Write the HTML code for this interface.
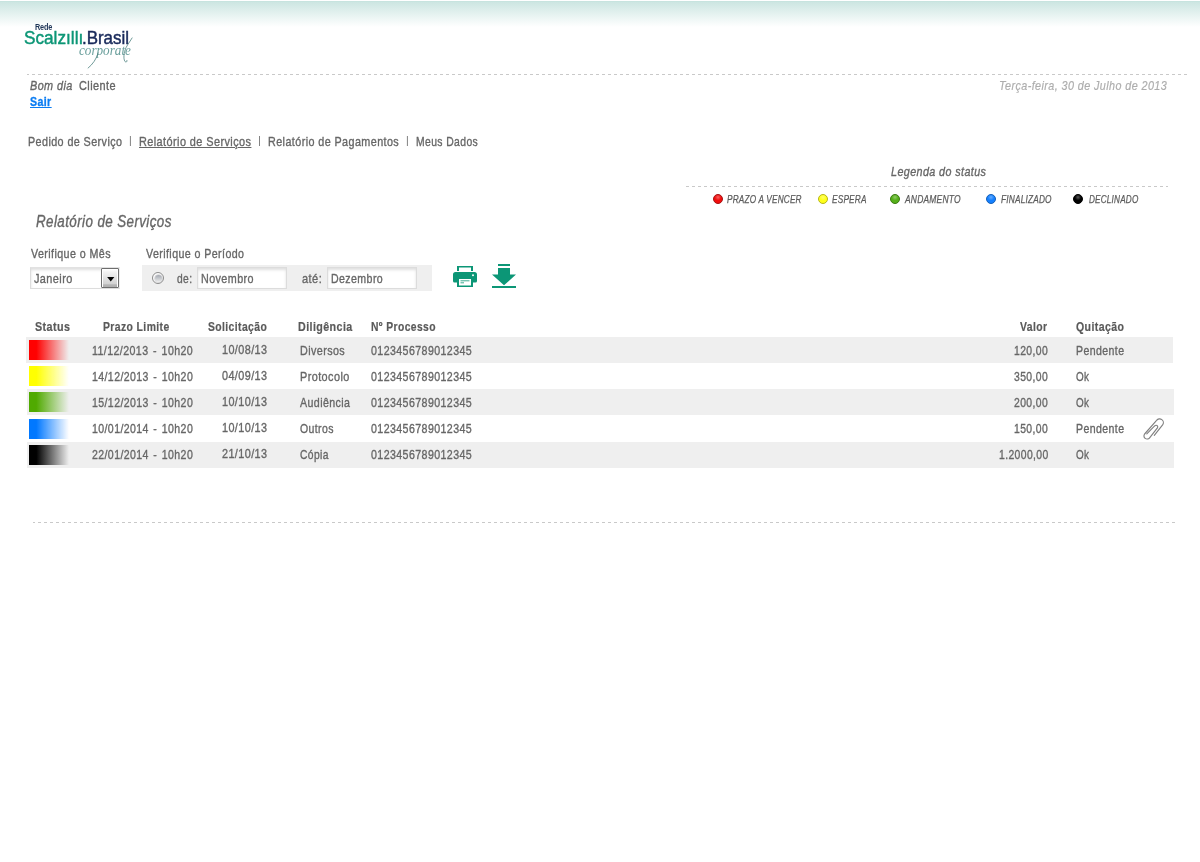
<!DOCTYPE html>
<html lang="pt-BR">
<head>
<meta charset="utf-8">
<title>Relatório de Serviços</title>
<style>
html,body{margin:0;padding:0;background:#fff;}
body{width:1200px;height:862px;position:relative;overflow:hidden;font-family:"Liberation Sans",sans-serif;color:#666;}
.t{-webkit-text-stroke:.35px currentColor;position:absolute;white-space:nowrap;line-height:1;transform-origin:0 0;margin:0;padding:0;font-weight:normal;color:#666;text-decoration:none;display:block;}
.abs{position:absolute;}
.topgrad{left:0;top:1px;width:1200px;height:26px;background:linear-gradient(#c3e2dd,#cde6e2 5%,#fff);}
.dash{height:1px;background:repeating-linear-gradient(90deg,#c9c9c9 0,#c9c9c9 3px,transparent 3px,transparent 6px);}
.dot{position:absolute;width:8px;height:8px;border-radius:50%;border:1px solid;top:194px;}
.row{position:absolute;left:27px;width:1147px;height:26px;background:#efefef;}
.sw{position:absolute;left:29px;width:40px;height:20px;}
.inp{position:absolute;box-sizing:border-box;height:22px;background:#fff;border:1px solid #dcdcdc;box-shadow:inset 0 2px 3px rgba(0,0,0,.13);}
</style>
</head>
<body>
<div class="abs topgrad"></div>
<div id="page" style="position:absolute;left:0;top:0;width:1200px;height:862px;will-change:transform;opacity:.999">

<header>
<div class="abs logo" style="left:0;top:0;width:160px;height:74px;">
<span class="t" style="left:34.6px;top:22.6px;font-size:8.3px;font-weight:bold;color:#1d3557;transform:scaleX(.88);letter-spacing:-.25px;-webkit-text-stroke:0">Rede</span>
<span class="t" style="left:24.2px;top:29px;font-size:18px;color:#0c9676;transform:scaleX(.955);-webkit-text-stroke:.45px #0c9676">Scalzıllı</span>
<span class="t" style="left:81.9px;top:29px;font-size:18px;color:#18295a;transform:scaleX(.94);-webkit-text-stroke:.45px #18295a">.Brasil</span>
<span class="t" style="left:79px;top:43.5px;font-family:'Liberation Serif',serif;font-style:italic;font-size:14px;color:#6a9f9c;transform:scaleX(.94);-webkit-text-stroke:0">corporate</span>
<svg class="abs" style="left:0;top:0" width="160" height="74" viewBox="0 0 160 74"><path d="M98.300 52.500C96.500 59 92.500 64.500 87.800 68.300" fill="none" stroke="#4d827f" stroke-width=".8"/><path d="M132.300 37.600C129.500 42.500 126 46 124.600 51.500C123.300 57 124 61.500 125.800 62C127 62 127.300 60.800 126.600 60" fill="none" stroke="#4d827f" stroke-width=".8"/></svg>
</div>

<div class="abs dash" style="left:27px;top:74px;width:1160px;background-position:-1px 0"></div>
<span class="t" style="left:29.50px;top:78.50px;font-size:13px;font-style:italic;letter-spacing:0.5px;transform:scaleX(0.8333);">Bom dia</span>
<span class="t" style="left:78.50px;top:78.50px;font-size:13px;letter-spacing:0.5px;transform:scaleX(0.8397);">Cliente</span>
<a class="t" href="#" style="left:30.00px;top:95.25px;font-size:13px;font-weight:bold;color:#0a7cf2;text-decoration:underline;letter-spacing:0.5px;transform:scaleX(0.8149);">Sair</a>
<span class="t" style="left:999.25px;top:78.50px;font-size:13px;font-style:italic;color:#adadad;-webkit-text-stroke:.2px currentColor;letter-spacing:0.5px;transform:scaleX(0.8295);">Terça-feira, 30 de Julho de 2013</span>
</header>
<nav>
<a class="t" href="#" style="left:28.00px;top:135.00px;font-size:13px;letter-spacing:0.5px;transform:scaleX(0.8281);">Pedido de Serviço</a>
<a class="t" href="#" style="left:138.75px;top:135.00px;font-size:13px;text-decoration:underline;letter-spacing:0.5px;transform:scaleX(0.8386);">Relatório de Serviços</a>
<a class="t" href="#" style="left:267.50px;top:135.00px;font-size:13px;letter-spacing:0.5px;transform:scaleX(0.8291);">Relatório de Pagamentos</a>
<a class="t" href="#" style="left:416.25px;top:135.00px;font-size:13px;letter-spacing:0.5px;transform:scaleX(0.7969);">Meus Dados</a>
<span class="t" style="left:128.90px;top:136.45px;font-size:10.3px;color:#6c6c6c;-webkit-text-stroke:0;">|</span>
<span class="t" style="left:258.15px;top:136.45px;font-size:10.3px;color:#6c6c6c;-webkit-text-stroke:0;">|</span>
<span class="t" style="left:405.90px;top:136.45px;font-size:10.3px;color:#6c6c6c;-webkit-text-stroke:0;">|</span>
</nav>
<section class="legend">
<span class="t" style="left:891.25px;top:164.75px;font-size:13px;font-style:italic;letter-spacing:0.5px;transform:scaleX(0.8262);">Legenda do status</span>
<div class="abs dash" style="left:686px;top:186px;width:482px;"></div>
<i class="dot" style="left:713px;background:radial-gradient(circle at 50% 28%,rgba(255,255,255,.35),rgba(255,255,255,0) 45%),#f20d0d;border-color:#a31515"></i>
<span class="t" style="left:726.50px;top:193.75px;font-size:10.5px;font-style:italic;color:#5c5c5c;-webkit-text-stroke:.25px currentColor;letter-spacing:0.25px;transform:scaleX(0.7822);">PRAZO A VENCER</span>
<i class="dot" style="left:818px;background:radial-gradient(circle at 50% 28%,rgba(255,255,255,.35),rgba(255,255,255,0) 45%),#ffff1a;border-color:#b5b51a"></i>
<span class="t" style="left:831.50px;top:193.75px;font-size:10.5px;font-style:italic;color:#5c5c5c;-webkit-text-stroke:.25px currentColor;letter-spacing:0.25px;transform:scaleX(0.7866);">ESPERA</span>
<i class="dot" style="left:889.5px;background:radial-gradient(circle at 50% 28%,rgba(255,255,255,.35),rgba(255,255,255,0) 45%),#55b019;border-color:#3c7a14"></i>
<span class="t" style="left:904.50px;top:193.75px;font-size:10.5px;font-style:italic;color:#5c5c5c;-webkit-text-stroke:.25px currentColor;letter-spacing:0.25px;transform:scaleX(0.8054);">ANDAMENTO</span>
<i class="dot" style="left:985.75px;background:radial-gradient(circle at 50% 28%,rgba(255,255,255,.35),rgba(255,255,255,0) 45%),#1480ff;border-color:#1560b8"></i>
<span class="t" style="left:1000.75px;top:193.75px;font-size:10.5px;font-style:italic;color:#5c5c5c;-webkit-text-stroke:.25px currentColor;letter-spacing:0.25px;transform:scaleX(0.7879);">FINALIZADO</span>
<i class="dot" style="left:1072.75px;background:radial-gradient(circle at 50% 28%,rgba(255,255,255,.35),rgba(255,255,255,0) 45%),#000;border-color:#000"></i>
<span class="t" style="left:1088.75px;top:193.75px;font-size:10.5px;font-style:italic;color:#5c5c5c;-webkit-text-stroke:.25px currentColor;letter-spacing:0.25px;transform:scaleX(0.7785);">DECLINADO</span>
</section>
<main>
<h1 class="t" style="left:35.60px;top:214.25px;font-size:16px;font-style:italic;letter-spacing:0.5px;transform:scaleX(0.8354);">Relatório de Serviços</h1>
<label class="t" style="left:31.25px;top:247.00px;font-size:13px;letter-spacing:0.5px;transform:scaleX(0.8229);">Verifique o Mês</label>
<label class="t" style="left:146.25px;top:247.00px;font-size:13px;letter-spacing:0.5px;transform:scaleX(0.8195);">Verifique o Período</label>
<div class="inp" style="left:30px;top:267px;width:90px;border-color:#e2e2e2 #eee #ddd #ddd"></div>
<div class="abs" style="left:101px;top:268px;width:18px;height:20px;box-sizing:border-box;border:1px solid #6e6e6e;border-radius:1px;box-shadow:inset 1px 1px 0 #fff,inset -1px 0 0 #fff;background:linear-gradient(#fff,#f3f3f3 15%,#e2e2e2 50%,#d2d2d2 82%,#b4b4b4 88%,#b0b0b0)"><svg class="abs" style="left:5px;top:8px" width="7.500" height="4.500" viewBox="0 0 8 5"><path d="M0 0H8L4 5Z" fill="#000"/></svg></div>
<span class="t" style="left:34.25px;top:271.50px;font-size:13px;letter-spacing:0.5px;transform:scaleX(0.8381);">Janeiro</span>
<div class="abs" style="left:142px;top:265px;width:290px;height:26px;background:#efefef"></div>
<div class="abs" style="left:152px;top:272px;width:12px;height:12px;box-sizing:border-box;border:1px solid #8c8c8c;border-radius:50%;background:#fbfbfb"><i class="abs" style="left:1.500px;top:1.500px;width:7px;height:7px;border-radius:50%;background:linear-gradient(#a4a8b0,#c4c7cc 45%,#ececec);box-shadow:0 0 0 .5px rgba(140,142,148,.5)"></i></div>
<span class="t" style="left:177.00px;top:271.50px;font-size:13px;letter-spacing:0.5px;transform:scaleX(0.7862);">de:</span>
<div class="inp" style="left:197px;top:267px;width:90px;"></div>
<span class="t" style="left:201.25px;top:271.50px;font-size:13px;letter-spacing:0.5px;transform:scaleX(0.8272);">Novembro</span>
<span class="t" style="left:302.00px;top:271.50px;font-size:13px;letter-spacing:0.5px;transform:scaleX(0.8496);">até:</span>
<div class="inp" style="left:327px;top:267px;width:90px;"></div>
<span class="t" style="left:331.30px;top:271.50px;font-size:13px;letter-spacing:0.5px;transform:scaleX(0.8146);">Dezembro</span>
<svg class="abs" style="left:453px;top:266px" width="24" height="21" viewBox="0 0 24 21"><path fill="#0c9676" d="M4 0H20V5H18V1.600H6V5H4Z"/><path fill="#0c9676" d="M2.500 6H21.500A2.500 2.500 0 0 1 24 8.500V15A1.500 1.500 0 0 1 22.500 16.500H20V21H4V16.500H1.500A1.500 1.500 0 0 1 0 15V8.500A2.500 2.500 0 0 1 2.500 6Z"/><rect x="6" y="13" width="12" height="6.500" fill="#fff"/><rect x="7.500" y="14.300" width="9" height="1" fill="#0c9676" opacity=".8"/><rect x="7.500" y="16.300" width="3.500" height="1" fill="#0c9676" opacity=".8"/><circle cx="20" cy="9.300" r="1" fill="#fff"/></svg>
<svg class="abs" style="left:492px;top:264px" width="24" height="24" viewBox="0 0 24 24"><rect x="6" y="0" width="12" height="2" fill="#0c9676"/><path fill="#0c9676" d="M6 4H18V10.500H24L12 21.300L0 10.500H6Z"/><rect x="0" y="22" width="24" height="2" fill="#0c9676"/></svg>
<div class="table">
<span class="t" style="left:35.00px;top:320.25px;font-size:13px;font-weight:bold;color:#5a5a5a;-webkit-text-stroke:.2px currentColor;letter-spacing:0.5px;transform:scaleX(0.8287);">Status</span>
<span class="t" style="left:103.25px;top:320.25px;font-size:13px;font-weight:bold;color:#5a5a5a;-webkit-text-stroke:.2px currentColor;letter-spacing:0.5px;transform:scaleX(0.8002);">Prazo Limite</span>
<span class="t" style="left:207.50px;top:320.25px;font-size:13px;font-weight:bold;color:#5a5a5a;-webkit-text-stroke:.2px currentColor;letter-spacing:0.5px;transform:scaleX(0.7978);">Solicitação</span>
<span class="t" style="left:298.25px;top:320.25px;font-size:13px;font-weight:bold;color:#5a5a5a;-webkit-text-stroke:.2px currentColor;letter-spacing:0.5px;transform:scaleX(0.8229);">Diligência</span>
<span class="t" style="left:371.25px;top:320.25px;font-size:13px;font-weight:bold;color:#5a5a5a;-webkit-text-stroke:.2px currentColor;letter-spacing:0.5px;transform:scaleX(0.7935);">Nº Processo</span>
<span class="t" style="left:1020.00px;top:320.25px;font-size:13px;font-weight:bold;color:#5a5a5a;-webkit-text-stroke:.2px currentColor;letter-spacing:0.5px;transform:scaleX(0.7989);">Valor</span>
<span class="t" style="left:1076.25px;top:320.25px;font-size:13px;font-weight:bold;color:#5a5a5a;-webkit-text-stroke:.2px currentColor;letter-spacing:0.5px;transform:scaleX(0.8118);">Quitação</span>
<div class="row" style="top:337px;left:26px"></div>
<div class="sw" style="top:340px;background:linear-gradient(90deg,rgb(255,0,0) 0,rgb(255,0,0) 18%,rgba(255,0,0,0) 100%)"></div>
<div class="sw" style="top:366px;background:linear-gradient(90deg,rgb(255,255,0) 0,rgb(255,255,0) 18%,rgba(255,255,0,0) 100%)"></div>
<div class="row" style="top:389px"></div>
<div class="sw" style="top:392px;background:linear-gradient(90deg,rgb(80,170,0) 0,rgb(80,170,0) 18%,rgba(80,170,0,0) 100%)"></div>
<div class="sw" style="top:419px;background:linear-gradient(90deg,rgb(0,120,255) 0,rgb(0,120,255) 18%,rgba(0,120,255,0) 100%)"></div>
<div class="row" style="top:442px"></div>
<div class="sw" style="top:445px;background:linear-gradient(90deg,rgb(0,0,0) 0,rgb(0,0,0) 18%,rgba(0,0,0,0) 100%)"></div>
<span class="t" style="left:91.75px;top:343.50px;font-size:13px;letter-spacing:0.5px;word-spacing:1.5px;transform:scaleX(0.8170);">11/12/2013 - 10h20</span>
<span class="t" style="left:222.00px;top:342.75px;font-size:13px;letter-spacing:0.5px;transform:scaleX(0.8316);">10/08/13</span>
<span class="t" style="left:299.50px;top:343.50px;font-size:13px;letter-spacing:0.5px;transform:scaleX(0.8275);">Diversos</span>
<span class="t" style="left:370.50px;top:343.50px;font-size:13px;letter-spacing:0.5px;transform:scaleX(0.8179);">0123456789012345</span>
<span class="t" style="left:1014.25px;top:343.50px;font-size:13px;letter-spacing:0.5px;transform:scaleX(0.7985);">120,00</span>
<span class="t" style="left:1076.25px;top:343.50px;font-size:13px;letter-spacing:0.5px;transform:scaleX(0.8112);">Pendente</span>
<span class="t" style="left:91.75px;top:369.50px;font-size:13px;letter-spacing:0.5px;word-spacing:1.5px;transform:scaleX(0.8107);">14/12/2013 - 10h20</span>
<span class="t" style="left:222.00px;top:368.75px;font-size:13px;letter-spacing:0.5px;transform:scaleX(0.8316);">04/09/13</span>
<span class="t" style="left:299.50px;top:369.50px;font-size:13px;letter-spacing:0.5px;transform:scaleX(0.8359);">Protocolo</span>
<span class="t" style="left:370.50px;top:369.50px;font-size:13px;letter-spacing:0.5px;transform:scaleX(0.8179);">0123456789012345</span>
<span class="t" style="left:1014.25px;top:369.50px;font-size:13px;letter-spacing:0.5px;transform:scaleX(0.7985);">350,00</span>
<span class="t" style="left:1076.25px;top:369.50px;font-size:13px;letter-spacing:0.5px;transform:scaleX(0.7591);">Ok</span>
<span class="t" style="left:91.75px;top:395.50px;font-size:13px;letter-spacing:0.5px;word-spacing:1.5px;transform:scaleX(0.8107);">15/12/2013 - 10h20</span>
<span class="t" style="left:222.00px;top:394.75px;font-size:13px;letter-spacing:0.5px;transform:scaleX(0.8316);">10/10/13</span>
<span class="t" style="left:299.50px;top:395.50px;font-size:13px;letter-spacing:0.5px;transform:scaleX(0.8182);">Audiência</span>
<span class="t" style="left:370.50px;top:395.50px;font-size:13px;letter-spacing:0.5px;transform:scaleX(0.8179);">0123456789012345</span>
<span class="t" style="left:1014.25px;top:395.50px;font-size:13px;letter-spacing:0.5px;transform:scaleX(0.7985);">200,00</span>
<span class="t" style="left:1076.25px;top:395.50px;font-size:13px;letter-spacing:0.5px;transform:scaleX(0.7591);">Ok</span>
<span class="t" style="left:91.75px;top:422.00px;font-size:13px;letter-spacing:0.5px;word-spacing:1.5px;transform:scaleX(0.8107);">10/01/2014 - 10h20</span>
<span class="t" style="left:222.00px;top:421.25px;font-size:13px;letter-spacing:0.5px;transform:scaleX(0.8316);">10/10/13</span>
<span class="t" style="left:299.50px;top:422.00px;font-size:13px;letter-spacing:0.5px;transform:scaleX(0.8069);">Outros</span>
<span class="t" style="left:370.50px;top:422.00px;font-size:13px;letter-spacing:0.5px;transform:scaleX(0.8179);">0123456789012345</span>
<span class="t" style="left:1014.25px;top:422.00px;font-size:13px;letter-spacing:0.5px;transform:scaleX(0.7985);">150,00</span>
<span class="t" style="left:1076.25px;top:422.00px;font-size:13px;letter-spacing:0.5px;transform:scaleX(0.8112);">Pendente</span>
<span class="t" style="left:91.75px;top:448.00px;font-size:13px;letter-spacing:0.5px;word-spacing:1.5px;transform:scaleX(0.8107);">22/01/2014 - 10h20</span>
<span class="t" style="left:222.00px;top:447.25px;font-size:13px;letter-spacing:0.5px;transform:scaleX(0.8316);">21/10/13</span>
<span class="t" style="left:299.50px;top:448.00px;font-size:13px;letter-spacing:0.5px;transform:scaleX(0.7924);">Cópia</span>
<span class="t" style="left:370.50px;top:448.00px;font-size:13px;letter-spacing:0.5px;transform:scaleX(0.8179);">0123456789012345</span>
<span class="t" style="left:998.75px;top:448.00px;font-size:13px;letter-spacing:0.5px;transform:scaleX(0.7964);">1.2000,00</span>
<span class="t" style="left:1076.25px;top:448.00px;font-size:13px;letter-spacing:0.5px;transform:scaleX(0.7591);">Ok</span>
<svg class="abs" style="left:1142px;top:417px" width="24" height="24" viewBox="0 0 24 24"><path d="M12.300 18.400L20.600 7.900A3.600 3.600 0 0 0 14.600 3.400L2.600 17A3.100 3.100 0 0 0 7.600 20.800L15.600 10.600A1.700 1.700 0 0 0 12.900 8.700L4.800 16.800" fill="none" stroke="#808080" stroke-width="1.150" stroke-linecap="round" stroke-linejoin="round"/></svg>
</div>
<div class="abs dash" style="left:33px;top:522px;width:1142px;background-position:-1px 0"></div>
</main>
</div>
</body>
</html>
